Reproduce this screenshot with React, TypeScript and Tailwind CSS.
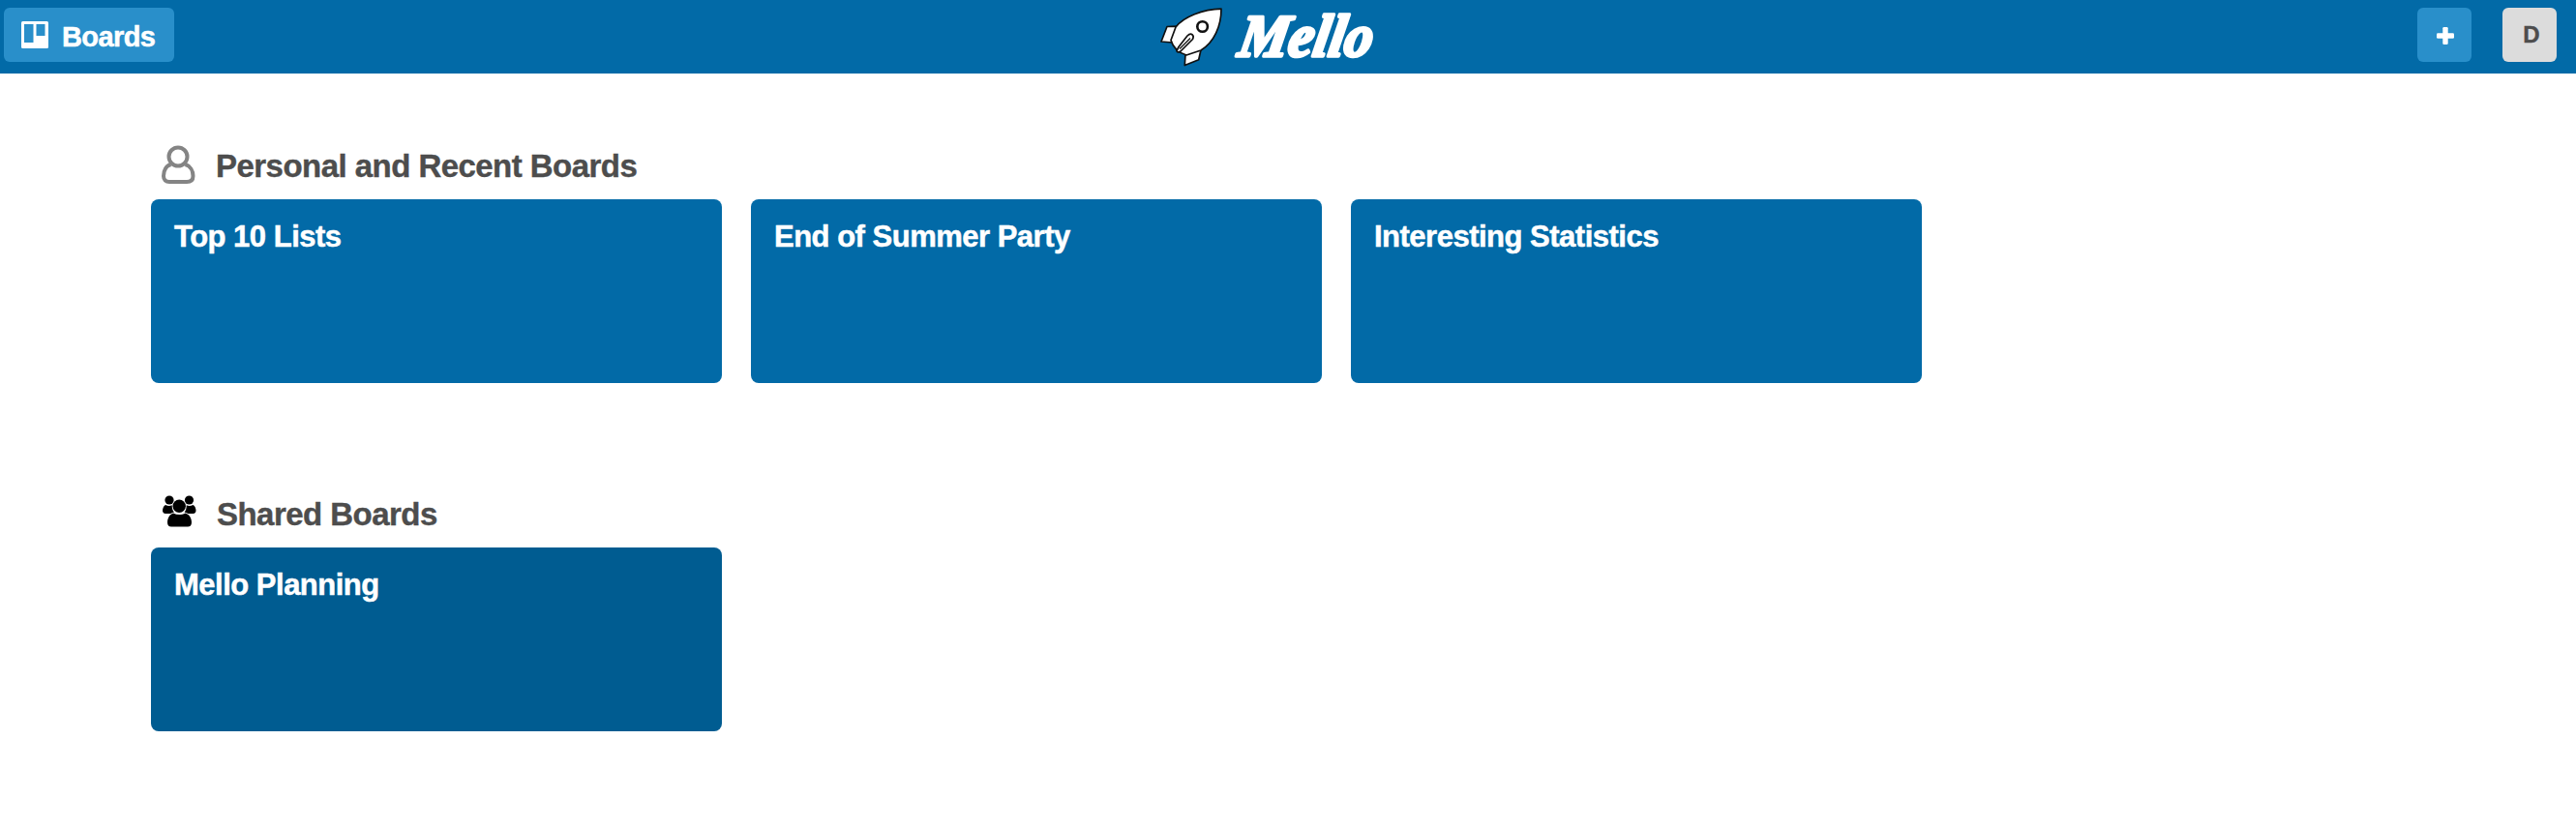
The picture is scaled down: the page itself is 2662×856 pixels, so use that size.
const personal = ["Top 10 Lists", "End of Summer Party", "Interesting Statistics"];

function Rocket() {
  return (
    <svg className="mt-2 h-[62px] w-[66px]" viewBox="1198 7.5 66 62" fill="#fff" stroke="#111" strokeWidth="1.7" strokeLinejoin="round">
      <path d="M1217 26.700L1206 27L1200 42.500L1212 43.500Z" />
      <path d="M1241 51L1238.700 61.300L1224.300 67L1225 55.500Z" />
      <path d="M1262 8.700C1243 9 1223 17 1215 27.500L1210 41C1212 48 1218 54 1226 56.500L1241 51.500C1255 43 1262 26 1262 8.700Z" />
      <circle cx="1242.600" cy="27" r="5.300" strokeWidth="2.600" />
      <path d="M1216 52L1218 48L1227 36.500C1231 32.500 1234.500 36 1232.500 40L1220 52.500C1218 54 1216 53.500 1216 52Z" />
      <path d="M1219 50L1230 39" fill="none" strokeWidth="1.300" />
    </svg>
  );
}

function PersonIcon() {
  return (
    <svg className="h-10 w-[35px]" viewBox="0 0 35 40" fill="none" stroke="#848484" strokeWidth="4">
      <circle cx="17" cy="12" r="9.500" />
      <path d="M9.500 20C4.500 21.500 2 26.500 2 32C2 36 4.500 38 8 38H26C30 38 32.500 36 32.500 32C32.500 26.500 29.500 21.500 24.500 20" />
    </svg>
  );
}

function GroupIcon() {
  return (
    <svg className="h-[33px] w-[35px]" viewBox="0 0 35 33" fill="#000">
      <circle cx="7" cy="5" r="4.600" />
      <circle cx="27.500" cy="5" r="4.600" />
      <circle cx="17.200" cy="11.300" r="6.700" />
      <path d="M3 10C5.500 11.500 8 11.300 9.700 10.300C9.700 14 10.500 16 12 17.500C10.500 17.700 9 18.500 8.300 19H3C1 19 0 17.500 0 16C0 13.500 1 11 3 10Z" />
      <path d="M31.500 10C29 11.500 26.500 11.300 24.700 10.300C24.700 14 24 16 22.500 17.500C24 17.700 25.500 18.500 26.200 19H31.500C33.500 19 34.500 17.500 34.500 16C34.500 13.500 33.500 11 31.500 10Z" />
      <path d="M11 18.500C15 20.500 19.500 20.500 23.500 18.500C28 20 30 24 30 28C30 31 28.500 32.500 26 32.500H9C6.500 32.500 5 31 5 28C5 24 7 20 11 18.500Z" />
    </svg>
  );
}

function Board({ title, shared = false }: { title: string; shared?: boolean }) {
  return (
    <a className={`block h-[190px] w-[590px] rounded-lg px-6 pt-[21px] text-[31px] leading-[36px] font-bold tracking-[-0.5px] text-white [-webkit-text-stroke:0.5px_#fff] ${shared ? "bg-[#005c91]" : "bg-[#026aa7]"}`}>
      {title}
    </a>
  );
}

export default function App() {
  return (
    <div className="h-[856px] bg-white font-['Liberation_Sans',Arial,sans-serif]">
      <header className="grid h-[76px] grid-cols-[1fr_auto_1fr] bg-[#026aa7] pr-5 pl-1">
        <button className="mt-2 flex h-14 w-44 items-center rounded-md bg-[#298fca] pl-[18px] text-[29px] leading-8 font-bold tracking-[-0.6px] text-white [-webkit-text-stroke:0.5px_#fff]">
          <svg className="mr-[14px] h-7 w-7" viewBox="0 0 28 28">
            <rect width="28" height="28" rx="1.500" fill="#fff" />
            <path d="M3 3H12.500V22H3ZM15.500 3H24.500V15H15.500Z" fill="#298fca" />
          </svg>
          <span className="pt-[3px]">Boards</span>
        </button>
        <div className="flex">
          <Rocket />
          <svg className="h-[76px] w-[184px] overflow-visible" viewBox="1264 0 184 76">
            <text
              transform="translate(1278 58) skewX(-10)"
              fill="#fff"
              stroke="#fff"
              strokeWidth="3.5"
              strokeLinejoin="round"
              fontFamily="Liberation Serif, serif"
              fontStyle="italic"
              fontWeight="700"
              fontSize="62"
              textLength="138"
              lengthAdjust="spacingAndGlyphs"
            >
              Mello
            </text>
          </svg>
        </div>
        <div className="flex justify-end gap-8 pt-2">
          <button className="flex h-14 w-14 items-center justify-center rounded-md bg-[#298fca] pt-0.5 pl-0.5">
            <svg className="h-[18px] w-[18px]" viewBox="0 0 18 18" fill="#fff">
              <rect x="6.300" width="5.400" height="18" rx="1.300" />
              <rect y="6.300" width="18" height="5.400" rx="1.300" />
            </svg>
          </button>
          <button className="flex h-14 w-14 items-center justify-center rounded-md bg-[#dcdcdc] pl-1 text-[24px] leading-[56px] font-bold text-[#4d4d4d] [-webkit-text-stroke:0.4px_#4d4d4d]">D</button>
        </div>
      </header>
      <main className="pl-[156px]">
        <section className="h-[360px]">
          <div className="flex h-[130px] items-start pt-[74px] pl-[11px]">
            <PersonIcon />
            <h2 className="ml-[21px] pt-1 text-[33px] leading-[36px] font-bold tracking-[-0.54px] text-[#4d4d4d] [-webkit-text-stroke:0.4px_#4d4d4d]">Personal and Recent Boards</h2>
          </div>
          <div className="flex gap-[30px]">
            {personal.map((title) => <Board key={title} title={title} />)}
          </div>
        </section>
        <section>
          <div className="flex h-[130px] items-start pt-[76px] pl-3">
            <GroupIcon />
            <h2 className="ml-[21px] pt-0.5 text-[33px] leading-[36px] font-bold tracking-[-0.54px] text-[#4d4d4d] [-webkit-text-stroke:0.4px_#4d4d4d]">Shared Boards</h2>
          </div>
          <Board title="Mello Planning" shared />
        </section>
      </main>
    </div>
  );
}
